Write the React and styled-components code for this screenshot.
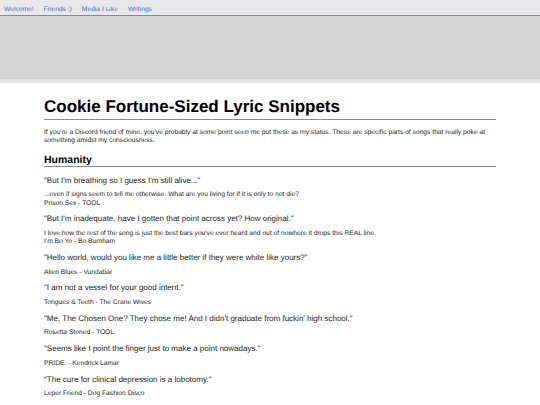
import styled, { createGlobalStyle } from "styled-components";

const GlobalStyle = createGlobalStyle`
  body {
    margin: 0;
    background: #ffffff;
    font-family: "Liberation Sans", Arial, sans-serif;
    color: #1c1c1c;
    text-rendering: geometricPrecision;
  }
`;

const NavBar = styled.nav`
  display: flex;
  align-items: center;
  gap: 10px;
  height: 16px;
  padding: 3px 4px 0;
  box-sizing: border-box;
  background: #e8e8ea;
  border-bottom: 1px solid #8a8a8a;
`;

const NavLink = styled.a`
  font-size: 6.7px;
  color: #3a72c4;
  text-decoration: none;
`;

const Banner = styled.div`
  height: 63px;
  background: #d4d4d4;
  border-bottom: 4px solid #e5e5e7;
`;

const Main = styled.main`
  width: 452px;
  margin: 0 auto;
  padding-top: 14px;
`;

const Title = styled.h1`
  margin: 0;
  padding-bottom: 2px;
  font-size: 17px;
  font-weight: bold;
  color: #000;
  border-bottom: 1px solid #8c8c8c;
`;

const Intro = styled.p`
  margin: 8.5px 0 8.5px;
  font-size: 6.7px;
  line-height: 8.4px;
`;

const SectionTitle = styled.h2`
  margin: 0 0 9px;
  font-size: 10.5px;
  font-weight: bold;
  color: #000;
  border-bottom: 1px solid #8c8c8c;
`;

const Quote = styled.p`
  margin: 6.6px 0;
  font-size: 8px;
`;

const Source = styled.p`
  margin: 6.6px 0;
  font-size: 6.7px;
  line-height: 8.2px;
`;

const snippets = [
  {
    quote: "\"But I'm breathing so I guess I'm still alive...\"",
    note: "...even if signs seem to tell me otherwise. What are you living for if it is only to not die?",
    source: "Prison Sex - TOOL",
  },
  {
    quote: "\"But I'm inadequate, have I gotten that point across yet? How original.\"",
    note: "I love how the rest of the song is just the best bars you've ever heard and out of nowhere it drops this REAL line.",
    source: "I'm Bo Yo - Bo Burnham",
  },
  {
    quote: "\"Hello world, would you like me a little better if they were white like yours?\"",
    source: "Alien Blues - Vundabar",
  },
  {
    quote: "\"I am not a vessel for your good intent.\"",
    source: "Tongues & Teeth - The Crane Wives",
  },
  {
    quote: "\"Me, The Chosen One? They chose me! And I didn't graduate from fuckin' high school.\"",
    source: "Rosetta Stoned - TOOL",
  },
  {
    quote: "\"Seems like I point the finger just to make a point nowadays.\"",
    source: "PRIDE. - Kendrick Lamar",
  },
  {
    quote: "\"The cure for clinical depression is a lobotomy.\"",
    source: "Leper Friend - Dog Fashion Disco",
  },
];

export default function App() {
  return (
    <>
      <GlobalStyle />
      <NavBar>
        <NavLink href="#">Welcome!</NavLink>
        <NavLink href="#">Friends :)</NavLink>
        <NavLink href="#">Media I Like</NavLink>
        <NavLink href="#">Writings</NavLink>
      </NavBar>
      <Banner />
      <Main>
        <Title>Cookie Fortune-Sized Lyric Snippets</Title>
        <Intro>
          If you're a Discord friend of mine, you've probably at some point seen me put these as my
          status. These are specific parts of songs that really poke at something amidst my
          consciousness.
        </Intro>
        <SectionTitle>Humanity</SectionTitle>
        {snippets.map((s) => (
          <div key={s.source}>
            <Quote>{s.quote}</Quote>
            <Source>
              {s.note && (
                <>
                  {s.note}
                  <br />
                </>
              )}
              {s.source}
            </Source>
          </div>
        ))}
      </Main>
    </>
  );
}
